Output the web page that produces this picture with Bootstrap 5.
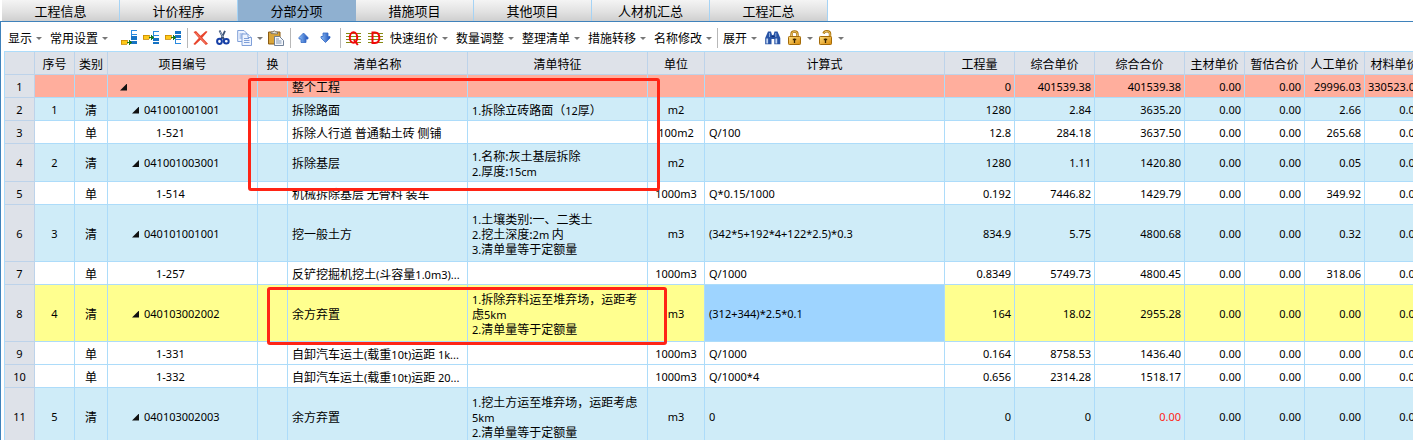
<!DOCTYPE html>
<html lang="zh-CN">
<head>
<meta charset="utf-8">
<meta name="viewport" content="width=device-width, initial-scale=1">
<title>分部分项</title>
<link href="https://cdn.jsdelivr.net/npm/bootstrap@5.3.0/dist/css/bootstrap.min.css" rel="stylesheet">
<style>
  :root { --grid: #addcfa; --head: #dee2e9; --edge: #3f82bb; }
  body { font-family: "Noto Sans CJK SC", "Noto Sans", sans-serif; font-size: 12px; line-height: 15px; color: #000; background: #fff; }
  .app { height: 100vh; }
  .main-tabs { padding-left: 2px; border-bottom: 1px solid var(--edge); }
  .main-tabs .nav-link { width: 118px; height: 21px; padding: 0; line-height: 22px; font-size: 13px; text-align: center; color: #000; border-radius: 0; border-right: 1px solid #a5d3f5; background: linear-gradient(#f4f4f4, #e2e2e2 55%, #cfcfcf); }
  .main-tabs .nav-link.active { color: #000; background: #8fb0d0; border-color: #8fb0d0; }
  .workarea { border-left: 1px solid var(--edge); min-height: 0; }
  .toolbar { height: 29px; padding: 3px 7px 0; gap: 6px; }
  .toolbar button { padding: 0; border: 0; background: none; color: #000; line-height: 16px; white-space: nowrap; }
  .toolbar svg { display: block; width: 16px; height: 16px; }
  .menu-btn { display: flex; align-items: center; gap: 4px; }
  .menu-btn::after { content: ""; border: solid transparent; border-width: 3px 3px 0; border-top-color: #777; width: 0; margin-right: -1px; }
  .menu-btn.text-menu { margin-right: 3px; }
  .sep { width: 1px; height: 20px; margin-right: -1px; background: #b8b8b8; }
  .defs { position: absolute; width: 0; height: 0; }
  .sheet { margin-left: 3px; }
  .bill { table-layout: fixed; width: 100%; min-width: 1421px; border-collapse: separate; border-spacing: 0; border-left: 1px solid var(--grid); border-top: 1px solid var(--grid); }
  .bill th, .bill td { height: 23px; padding: 0 4px; border-right: 1px solid var(--grid); border-bottom: 1px solid var(--grid); font-weight: 400; white-space: nowrap; overflow: hidden; vertical-align: middle; }
  .bill th { background: var(--head); text-align: center; border-color: #bdd3ea; padding: 0; }
  .bill td, .lat { font-family: "Noto Sans", "Noto Sans CJK SC", sans-serif; font-size: 11px; }
  .lat { line-height: 11px; }
  .bill td.zh { font-family: "Noto Sans CJK SC", sans-serif; font-size: 12px; }
  .bill tbody th { font-family: "Noto Sans", sans-serif; font-size: 11px; }
  .bill td.num { text-align: right; padding: 0 3px; }
  .bill td.mid { text-align: center; padding: 0; }
  .bill td.spec { white-space: pre-line; }
  .bill .lines-2 > * { height: 38px; }
  .bill .lines-3 > * { height: 57px; }
  .bill .total > td { background: #ffae9d; }
  .bill .item > td { background: #cfecf8; }
  .bill .current > td { background: #ffff8f; }
  .bill .current > td.picked { background: #9ed4ff; }
  .bill td.over { color: #ff2415; }
  .bill .code { padding-left: 24px; }
  .bill .total .code { padding-left: 12px; }
  .bill .sub .code { padding-left: 48px; }
  .twist { width: 12px; height: 7px; padding: 0; border: 0; background: none; vertical-align: 0; line-height: 0; text-align: left; }
  .twist::before { content: ""; display: block; width: 7px; height: 7px; background: #111; clip-path: polygon(100% 0, 100% 100%, 0 100%); }
  .callout { position: absolute; border: 3px solid #ff2415; border-radius: 3px; pointer-events: none; }
  .callout-a { left: 244px; top: 27px; width: 412px; height: 113px; }
  .callout-b { left: 263px; top: 236px; width: 400px; height: 58px; }
</style>
</head>
<body>
<svg class="defs" xmlns="http://www.w3.org/2000/svg" aria-hidden="true">
  <linearGradient id="gBlue" x1="0" x2="1"><stop offset="0" stop-color="#8fc0f8"/><stop offset="1" stop-color="#1c50b8"/></linearGradient>
  <linearGradient id="gGold" x1="0" x2="1" y2="1"><stop offset="0" stop-color="#ffdf80"/><stop offset="1" stop-color="#d98a08"/></linearGradient>
</svg>
<div class="app d-flex flex-column overflow-hidden">
  <nav class="nav main-tabs flex-nowrap" aria-label="工程页面">
    <a class="nav-link" href="#">工程信息</a>
    <a class="nav-link" href="#">计价程序</a>
    <a class="nav-link active" href="#" aria-current="page">分部分项</a>
    <a class="nav-link" href="#">措施项目</a>
    <a class="nav-link" href="#">其他项目</a>
    <a class="nav-link" href="#">人材机汇总</a>
    <a class="nav-link" href="#">工程汇总</a>
  </nav>
  <main class="workarea flex-grow-1 d-flex flex-column">
    <div class="toolbar d-flex align-items-center flex-shrink-0" role="toolbar" aria-label="工具栏">
      <button type="button" class="menu-btn text-menu">显示</button>
      <button type="button" class="menu-btn text-menu me-2">常用设置</button>
      <button type="button" aria-label="插入下级"><svg viewBox="0 0 16 16" shape-rendering="crispEdges"><path d="M16 .5h-5.500v4H16M10.500 4v5" fill="none" stroke="#2a8be0"/><path d="M10 6h6v4h-6zM10 11h6v3h-6z" fill="#1673c4"/><path d="M0 10h6v4H0z" fill="#ffc91a" stroke="#c98a00" stroke-width=".8"/><path d="M6 12.500h5M8.500 10v5M9.500 11v3" stroke="#1b7a1b" fill="none"/></svg></button>
      <button type="button" aria-label="插入同级"><svg viewBox="0 0 16 16" shape-rendering="crispEdges"><path d="M16 1.500h-5.500v4H16M10.500 5v5" fill="none" stroke="#2a8be0"/><path d="M10 8h6v3h-6zM10 12h6v2h-6z" fill="#1673c4"/><path d="M0 5h6v4H0z" fill="#ffc91a" stroke="#c98a00" stroke-width=".8"/><path d="M6 7.500h5M8.500 5v5M9.500 6v3" stroke="#1b7a1b" fill="none"/></svg></button>
      <button type="button" aria-label="插入上级"><svg viewBox="0 0 16 16" shape-rendering="crispEdges"><path d="M16 9.500h-5.500v4H16M10.500 5v5" fill="none" stroke="#2a8be0"/><path d="M10 1h6v3h-6zM10 4.500h6v3h-6z" fill="#1673c4"/><path d="M0 5h6v4H0z" fill="#ffc91a" stroke="#c98a00" stroke-width=".8"/><path d="M6 7.500h5M8.500 5v5M9.500 6v3" stroke="#1b7a1b" fill="none"/></svg></button>
      <span class="sep"></span>
      <button type="button" aria-label="删除"><svg viewBox="0 0 16 16"><path d="M.5 2 3 1l4.500 4.800L13 1l1.500.8L9.300 7.700 15 13.800 12.800 15 7.600 9.700 2 15 .4 14 5.800 8z" fill="#e8452c"/><path d="M2.500 2.800 12.800 13.500" stroke="#f48b78"/></svg></button>
      <button type="button" aria-label="剪切"><svg viewBox="0 0 16 16" fill="none"><path d="M4.500.5 9.300 10M10 .8 6.200 9" stroke="#3b5174" stroke-width="1.800"/><path d="M5 1.500 8 7" stroke="#b9c9df" stroke-width=".8"/><ellipse cx="4.500" cy="11.300" rx="2.400" ry="2.600" stroke="#163fa6" stroke-width="2"/><ellipse cx="11.300" cy="11.300" rx="2.400" ry="2.200" stroke="#163fa6" stroke-width="2"/></svg></button>
      <button type="button" class="menu-btn" aria-label="复制"><svg viewBox="0 0 16 16" fill="#eef4ff" stroke="#7f9fd8"><path d="M.7.500H7l2.500 2.500v8.500H.7z"/><path d="M2.500 4h4M2.500 6h4M2.500 8h4"/><path d="M5 4h6l3.500 3.500v8H5z"/><path d="M11 4v3.500h3.500" fill="#fff"/><path d="M7 8.500h5M7 10.500h5.500M7 12.500h5.500"/></svg></button>
      <button type="button" aria-label="粘贴"><svg viewBox="0 0 16 16"><path d="M.5 2h11.500v12H.5z" fill="#d9a53b" stroke="#8a5a12"/><path d="M3 3.500V2h2Q6.200-.8 7.500 2h2v2z" fill="#e8e6db" stroke="#6f675a" stroke-width=".8"/><path d="M6.500 6.500h5l4 4v5h-9z" fill="#f4f7fc" stroke="#63758f" stroke-width=".9"/><path d="M8 9h3M8 11h5.500M8 13h5.500" stroke="#8297b5"/></svg></button>
      <span class="sep"></span>
      <button type="button" aria-label="上移"><svg viewBox="0 0 16 16"><path d="M7.500 3 12 7.500V9h-2v3.500H5V9H3V7.500z" fill="url(#gBlue)" stroke="#3268c4" stroke-width=".8"/></svg></button>
      <button type="button" aria-label="下移"><svg viewBox="0 0 16 16"><path d="M7.500 12.500 12 8V6.500h-2V3H5v3.500H3V8z" fill="url(#gBlue)" stroke="#3268c4" stroke-width=".8"/></svg></button>
      <span class="sep"></span>
      <button type="button" aria-label="清单查询"><svg viewBox="0 0 16 16"><path d="M0 3.500h15M0 6.500h15M0 9.500h15M0 12.500h15" stroke="#868a12"/><ellipse cx="7.500" cy="7.500" rx="3.700" ry="5.300" fill="none" stroke="#f00808" stroke-width="2"/><path d="M8 10 11.800 15" stroke="#f00808" stroke-width="2"/></svg></button>
      <button type="button" aria-label="定额查询"><svg viewBox="0 0 16 16"><path d="M0 3.500h15M0 6.500h15M0 9.500h15M0 12.500h15" stroke="#868a12"/><path d="M4.500 2.500H7q4.300 0 4.300 5.200T7 13H4.500z" fill="none" stroke="#f00808" stroke-width="2"/></svg></button>
      <button type="button" class="menu-btn text-menu">快速组价</button>
      <button type="button" class="menu-btn text-menu">数量调整</button>
      <button type="button" class="menu-btn text-menu">整理清单</button>
      <button type="button" class="menu-btn text-menu">措施转移</button>
      <button type="button" class="menu-btn">名称修改</button>
      <span class="sep"></span>
      <button type="button" class="menu-btn text-menu">展开</button>
      <button type="button" aria-label="查找"><svg viewBox="0 0 16 16" fill="#2853a5"><path d="M3 1.500h3l1 3.500h1.500l1-3.500h3L15.300 8v6.200h-6V9H6.500v5.200H.2V8z"/><path d="M2.200 8.500v5M11.300 8.500v5" stroke="#c3d6f2" stroke-width="1.800"/><path d="M4.500 3v4M10.800 3v4" stroke="#8aabdd"/><path d="M6.500 6.500h3" stroke="#122f70"/></svg></button>
      <button type="button" class="menu-btn" aria-label="锁定"><svg viewBox="0 0 16 16"><path d="M4.500 7V4.500Q4.500 1.500 7.500 1.500T10.500 4.500V7" fill="none" stroke="#a87008" stroke-width="2.400"/><path d="M4.500 7V4.500Q4.500 1.500 7.500 1.500T10.500 4.500V7" fill="none" stroke="#f5cf70" stroke-width=".9"/><rect x="1.500" y="6.500" width="12" height="8" rx=".8" fill="url(#gGold)" stroke="#a36a08"/><path d="M5.800 9.500h3.400M7.500 8.500V13" stroke="#3a2600" stroke-width="1.300"/></svg></button>
      <button type="button" class="menu-btn" aria-label="解锁"><svg viewBox="0 0 16 16"><path d="M5.500 3.500Q6.500.8 9.500 1.300T12 5V7" fill="none" stroke="#a87008" stroke-width="2.400"/><path d="M5.500 3.500Q6.500.8 9.500 1.300T12 5V7" fill="none" stroke="#f5cf70" stroke-width=".9"/><rect x="1.500" y="6.500" width="12" height="8" rx=".8" fill="url(#gGold)" stroke="#a36a08"/><path d="M5.800 9.500h3.400M7.500 8.500V13" stroke="#3a2600" stroke-width="1.300"/></svg></button>
    </div>
    <div class="sheet position-relative overflow-hidden flex-grow-1">
      <table class="bill">
        <colgroup>
          <col style="width:30px"><col style="width:40px"><col style="width:33px"><col style="width:150px"><col style="width:30px"><col style="width:180px"><col style="width:180px"><col style="width:57px"><col><col style="width:70px"><col style="width:80px"><col style="width:90px"><col style="width:60px"><col style="width:60px"><col style="width:60px"><col style="width:60px">
        </colgroup>
        <thead>
          <tr><th></th><th>序号</th><th>类别</th><th>项目编号</th><th>换</th><th>清单名称</th><th>清单特征</th><th>单位</th><th>计算式</th><th>工程量</th><th>综合单价</th><th>综合合价</th><th>主材单价</th><th>暂估合价</th><th>人工单价</th><th>材料单价</th></tr>
        </thead>
        <tbody>
          <tr class="total"><th>1</th><td></td><td></td><td class="code"><button type="button" class="twist" aria-label="折叠"></button></td><td></td><td class="zh">整个工程</td><td></td><td></td><td></td><td class="num">0</td><td class="num">401539.38</td><td class="num">401539.38</td><td class="num">0.00</td><td class="num">0.00</td><td class="num">29996.03</td><td class="num">330523.01</td></tr>
          <tr class="item"><th>2</th><td class="mid">1</td><td class="mid zh">清</td><td class="code"><button type="button" class="twist" aria-label="折叠"></button>041001001001</td><td></td><td class="zh">拆除路面</td><td class="zh spec"><span class="lat">1.</span>拆除立砖路面（<span class="lat">12</span>厚）</td><td class="mid">m2</td><td></td><td class="num">1280</td><td class="num">2.84</td><td class="num">3635.20</td><td class="num">0.00</td><td class="num">0.00</td><td class="num">2.66</td><td class="num">0.00</td></tr>
          <tr class="sub"><th>3</th><td></td><td class="mid zh">单</td><td class="code">1-521</td><td></td><td class="zh">拆除人行道 普通黏土砖 侧铺</td><td></td><td class="mid">100m2</td><td>Q/100</td><td class="num">12.8</td><td class="num">284.18</td><td class="num">3637.50</td><td class="num">0.00</td><td class="num">0.00</td><td class="num">265.68</td><td class="num">0.00</td></tr>
          <tr class="item lines-2"><th>4</th><td class="mid">2</td><td class="mid zh">清</td><td class="code"><button type="button" class="twist" aria-label="折叠"></button>041001003001</td><td></td><td class="zh">拆除基层</td><td class="zh spec"><span class="lat">1.</span>名称:灰土基层拆除
<span class="lat">2.</span>厚度:<span class="lat">15cm</span></td><td class="mid">m2</td><td></td><td class="num">1280</td><td class="num">1.11</td><td class="num">1420.80</td><td class="num">0.00</td><td class="num">0.00</td><td class="num">0.05</td><td class="num">0.00</td></tr>
          <tr class="sub"><th>5</th><td></td><td class="mid zh">单</td><td class="code">1-514</td><td></td><td class="zh">机械拆除基层 无骨料 装车</td><td></td><td class="mid">1000m3</td><td>Q*0.15/1000</td><td class="num">0.192</td><td class="num">7446.82</td><td class="num">1429.79</td><td class="num">0.00</td><td class="num">0.00</td><td class="num">349.92</td><td class="num">0.00</td></tr>
          <tr class="item lines-3"><th>6</th><td class="mid">3</td><td class="mid zh">清</td><td class="code"><button type="button" class="twist" aria-label="折叠"></button>040101001001</td><td></td><td class="zh">挖一般土方</td><td class="zh spec"><span class="lat">1.</span>土壤类别:一、二类土
<span class="lat">2.</span>挖土深度:<span class="lat">2m</span> 内
<span class="lat">3.</span>清单量等于定额量</td><td class="mid">m3</td><td>(342*5+192*4+122*2.5)*0.3</td><td class="num">834.9</td><td class="num">5.75</td><td class="num">4800.68</td><td class="num">0.00</td><td class="num">0.00</td><td class="num">0.32</td><td class="num">0.00</td></tr>
          <tr class="sub"><th>7</th><td></td><td class="mid zh">单</td><td class="code">1-257</td><td></td><td class="zh">反铲挖掘机挖土<span class="lat">(</span>斗容量<span class="lat">1.0m3)...</span></td><td></td><td class="mid">1000m3</td><td>Q/1000</td><td class="num">0.8349</td><td class="num">5749.73</td><td class="num">4800.45</td><td class="num">0.00</td><td class="num">0.00</td><td class="num">318.06</td><td class="num">0.00</td></tr>
          <tr class="current lines-3"><th>8</th><td class="mid">4</td><td class="mid zh">清</td><td class="code"><button type="button" class="twist" aria-label="折叠"></button>040103002002</td><td></td><td class="zh">余方弃置</td><td class="zh spec"><span class="lat">1.</span>拆除弃料运至堆弃场，运距考虑<span class="lat">5km</span>
<span class="lat">2.</span>清单量等于定额量</td><td class="mid">m3</td><td class="picked">(312+344)*2.5*0.1</td><td class="num">164</td><td class="num">18.02</td><td class="num">2955.28</td><td class="num">0.00</td><td class="num">0.00</td><td class="num">0.00</td><td class="num">0.00</td></tr>
          <tr class="sub"><th>9</th><td></td><td class="mid zh">单</td><td class="code">1-331</td><td></td><td class="zh">自卸汽车运土<span class="lat">(</span>载重<span class="lat">10t)</span>运距 <span class="lat">1k...</span></td><td></td><td class="mid">1000m3</td><td>Q/1000</td><td class="num">0.164</td><td class="num">8758.53</td><td class="num">1436.40</td><td class="num">0.00</td><td class="num">0.00</td><td class="num">0.00</td><td class="num">0.00</td></tr>
          <tr class="sub"><th>10</th><td></td><td class="mid zh">单</td><td class="code">1-332</td><td></td><td class="zh">自卸汽车运土<span class="lat">(</span>载重<span class="lat">10t)</span>运距 <span class="lat">20...</span></td><td></td><td class="mid">1000m3</td><td>Q/1000*4</td><td class="num">0.656</td><td class="num">2314.28</td><td class="num">1518.17</td><td class="num">0.00</td><td class="num">0.00</td><td class="num">0.00</td><td class="num">0.00</td></tr>
          <tr class="item lines-3"><th>11</th><td class="mid">5</td><td class="mid zh">清</td><td class="code"><button type="button" class="twist" aria-label="折叠"></button>040103002003</td><td></td><td class="zh">余方弃置</td><td class="zh spec"><span class="lat">1.</span>挖土方运至堆弃场，运距考虑<span class="lat">5km</span>
<span class="lat">2.</span>清单量等于定额量</td><td class="mid">m3</td><td>0</td><td class="num">0</td><td class="num">0</td><td class="num over">0.00</td><td class="num">0.00</td><td class="num">0.00</td><td class="num">0.00</td><td class="num">0.00</td></tr>
        </tbody>
      </table>
      <div class="callout callout-a"></div>
      <div class="callout callout-b"></div>
    </div>
  </main>
</div>
<script src="https://cdn.jsdelivr.net/npm/bootstrap@5.3.0/dist/js/bootstrap.bundle.min.js"></script>
</body>
</html>
